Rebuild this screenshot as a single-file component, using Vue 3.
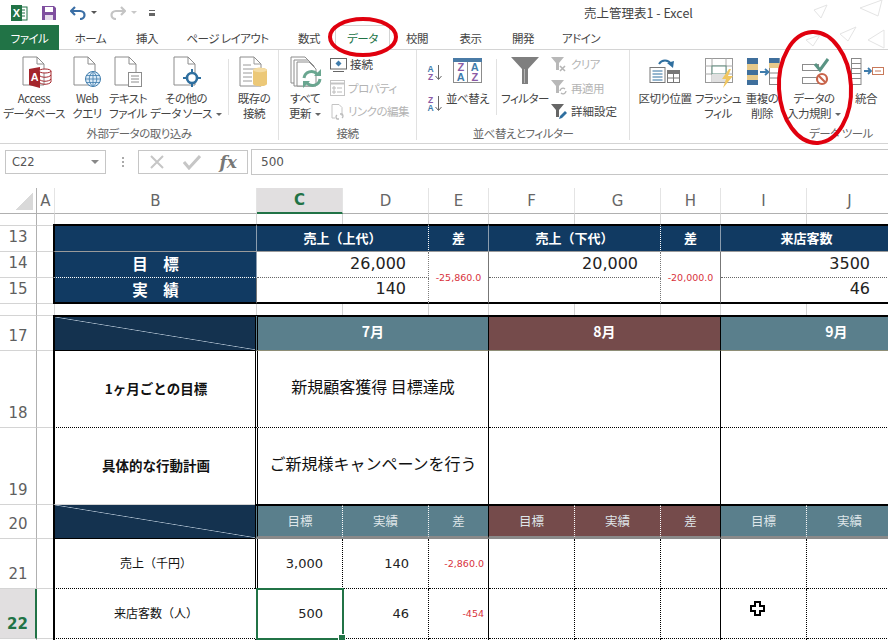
<template>
  <div class="window">
    <!-- Title bar -->
    <div class="titlebar">
      <div class="qat">
        <svg class="qi" width="18" height="18" viewBox="0 0 18 18">
          <rect x="7" y="3" width="10" height="13" fill="#fff" stroke="#217346" />
          <path d="M10 6h5M10 9h5M10 12h5" stroke="#217346" />
          <rect x="1" y="1" width="11" height="16" fill="#217346" />
          <text x="6.5" y="13" text-anchor="middle" class="xl">X</text>
        </svg>
        <svg class="qi save" width="16" height="16" viewBox="0 0 16 16">
          <path d="M1 1h12l2 2v12H1z" fill="#7f4f9f" />
          <rect x="4" y="2" width="8" height="5" fill="#fff" />
          <rect x="4" y="10" width="8" height="5" fill="#e6dcec" />
        </svg>
        <svg class="qi undo" width="16" height="14" viewBox="0 0 16 14">
          <path d="M5 1 1 5l4 4M1.500 5H10c6 0 6 8 0 8" fill="none" stroke="#3a6ea5" stroke-width="2.200" />
        </svg>
        <i class="caret dark"></i>
        <svg class="qi redo" width="16" height="14" viewBox="0 0 16 14">
          <path d="m11 1 4 4-4 4M14.500 5H6c-6 0-6 8 0 8" fill="none" stroke="#c4c4c4" stroke-width="2.200" />
        </svg>
        <i class="caret light"></i>
        <span class="qat-more"></span>
      </div>
      <span class="doc-title">売上管理表1 - Excel</span>
    </div>

    <!-- Tabs -->
    <div class="tabs">
      <span class="file-tab">ファイル</span>
      <span v-for="tab in tabs" :key="tab" class="tab" :class="{ active: tab === 'データ' }">{{ tab }}</span>
    </div>

    <!-- Ribbon -->
    <div class="ribbon">
      <section class="group g1">
        <div class="group-body">
          <div class="big">
            <svg class="ico" width="36" height="32" viewBox="0 0 36 32">
              <path d="M7 1h14l7 7v21H7z" fill="#fff" stroke="#8c8c8c" />
              <path d="M21 1v7h7" fill="none" stroke="#8c8c8c" />
              <path d="M13 13l11-2v21l-11-3z" fill="#a4262c" />
              <text x="18.500" y="25" text-anchor="middle" class="acc">A</text>
              <ellipse cx="29" cy="15" rx="6" ry="2" fill="#fff" stroke="#a4262c" />
              <path d="M23 15v11c2 3 10 3 12 0V15M23 19c2 3 10 3 12 0M23 23c2 3 10 3 12 0" fill="none" stroke="#a4262c" />
            </svg>
            <span>Access<br />データベース</span>
          </div>
          <div class="big">
            <svg class="ico" width="30" height="32" viewBox="0 0 30 32">
              <path d="M2 1h14l7 7v21H2z" fill="#fff" stroke="#8c8c8c" />
              <path d="M16 1v7h7" fill="none" stroke="#8c8c8c" />
              <circle cx="21" cy="23" r="7.500" fill="#dcebf7" stroke="#3f7cac" />
              <path d="M13.500 23h15M14.500 19.500h13M14.500 26.500h13M21 15.500v15M21 15.500c-5 4-5 11 0 15M21 15.500c5 4 5 11 0 15" fill="none" stroke="#3f7cac" stroke-width=".8" />
            </svg>
            <span>Web<br />クエリ</span>
          </div>
          <div class="big">
            <svg class="ico" width="30" height="32" viewBox="0 0 30 32">
              <path d="M2 1h14l7 7v21H2z" fill="#fff" stroke="#8c8c8c" />
              <path d="M16 1v7h7" fill="none" stroke="#8c8c8c" />
              <rect x="15.500" y="16.500" width="13" height="14" fill="#fff" stroke="#8c8c8c" />
              <path d="M18 20h8M18 23h8M18 26h8" stroke="#8c8c8c" />
            </svg>
            <span>テキスト<br />ファイル</span>
          </div>
          <div class="big">
            <svg class="ico" width="30" height="32" viewBox="0 0 30 32">
              <path d="M3 1h14l7 7v21H3z" fill="#fff" stroke="#8c8c8c" />
              <path d="M17 1v7h7" fill="none" stroke="#8c8c8c" />
              <circle cx="21" cy="22" r="5" fill="#fff" stroke="#2f6f9f" stroke-width="2.600" />
              <path d="M21 13v5M21 26v5M12 22h5M25 22h5" stroke="#2f6f9f" stroke-width="2" />
            </svg>
            <span>その他の<br />データ ソース<i class="caret"></i></span>
          </div>
          <div class="sep"></div>
          <div class="big">
            <svg class="ico" width="32" height="32" viewBox="0 0 32 32">
              <path d="M2 1h14l7 7v22H2z" fill="#fff" stroke="#8c8c8c" />
              <path d="M16 1v7h7M5 9h8M5 13h14M5 17h9M5 21h9M5 25h9" fill="none" stroke="#9a9a9a" />
              <path d="M15 14c1-3 13-3 14 0v14c-1 3-13 3-14 0z" fill="#ecc877" />
              <ellipse cx="22" cy="14" rx="7" ry="2.200" fill="#f4dca4" />
            </svg>
            <span>既存の<br />接続</span>
          </div>
        </div>
        <div class="group-label">外部データの取り込み</div>
      </section>

      <section class="group g2">
        <div class="group-body">
          <div class="big">
            <svg class="ico" width="36" height="32" viewBox="0 0 36 32">
              <path d="M4 1h14l6 6v20H4z" fill="#fff" stroke="#8c8c8c" />
              <path d="M7 4h14l6 6v20H7z" fill="#fff" stroke="#8c8c8c" />
              <path d="M10 6h12l7 7v17H10z" fill="#fff" stroke="#8c8c8c" />
              <path d="M17 22a7.500 7.500 0 0 1 13-4" fill="none" stroke="#6aa690" stroke-width="3" />
              <path d="M33 23a7.500 7.500 0 0 1-13 4" fill="none" stroke="#6aa690" stroke-width="3" />
              <path d="M27 20h7v-7zM23 25h-7v7z" fill="#6aa690" />
            </svg>
            <span>すべて<br />更新<i class="caret"></i></span>
          </div>
          <div class="smalls">
            <div class="small">
              <svg width="17" height="14" viewBox="0 0 17 14">
                <rect x=".5" y=".5" width="16" height="10.500" fill="#fff" stroke="#666" />
                <path d="M3 13.500h11" stroke="#666" />
                <path d="m8.500 2.500 3 3-3 3-3-3z" fill="#3f7cac" />
              </svg>
              <span>接続</span>
            </div>
            <div class="small off">
              <svg width="15" height="16" viewBox="0 0 15 16">
                <rect x=".5" y=".5" width="14" height="15" fill="#fff" stroke="#c4c4c4" />
                <path d="M1 3.500h13" stroke="#c4c4c4" stroke-width="2" />
                <path d="M3 7h2v2H3zM3 11h2v2H3zM7 8h5M7 12h5" fill="none" stroke="#bbb" />
              </svg>
              <span>プロパティ</span>
            </div>
            <div class="small off">
              <svg width="15" height="16" viewBox="0 0 15 16">
                <path d="M2 .5h7l3 3V12M2 .5V14h3" fill="none" stroke="#c4c4c4" />
                <path d="M7 11a2.500 2.500 0 0 0 0 4h2M10 10h2a2.500 2.500 0 0 1 0 4" fill="none" stroke="#bbb" stroke-width="1.300" />
              </svg>
              <span>リンクの編集</span>
            </div>
          </div>
        </div>
        <div class="group-label">接続</div>
      </section>

      <section class="group g3">
        <div class="group-body">
          <div class="sort-col">
            <svg width="16" height="17" viewBox="0 0 16 17">
              <text x="4.500" y="8" text-anchor="middle" class="az blue">A</text>
              <text x="4.500" y="16" text-anchor="middle" class="az purple">Z</text>
              <path d="M12.500 1v14M9.500 12l3 3.500 3-3.500" fill="none" stroke="#666" />
            </svg>
            <svg width="16" height="17" viewBox="0 0 16 17">
              <text x="4.500" y="8" text-anchor="middle" class="az purple">Z</text>
              <text x="4.500" y="16" text-anchor="middle" class="az blue">A</text>
              <path d="M12.500 1v14M9.500 12l3 3.500 3-3.500" fill="none" stroke="#666" />
            </svg>
          </div>
          <div class="big">
            <svg class="ico" width="30" height="32" viewBox="0 0 30 32">
              <rect x=".5" y="2.500" width="28" height="24" fill="#fff" stroke="#8c8c8c" />
              <rect y="2" width="29" height="4" fill="#4a7ba6" />
              <path d="M14.500 6v20" stroke="#8c8c8c" />
              <text x="7.500" y="15" text-anchor="middle" class="za purple">Z</text>
              <text x="7.500" y="25" text-anchor="middle" class="za blue">A</text>
              <text x="21.500" y="15" text-anchor="middle" class="za blue">A</text>
              <text x="21.500" y="25" text-anchor="middle" class="za purple">Z</text>
            </svg>
            <span>並べ替え</span>
          </div>
          <div class="sep"></div>
          <div class="big">
            <svg class="ico" width="30" height="32" viewBox="0 0 30 32">
              <path d="M1 1h28L18 13v15h-6V13z" fill="#7f7f7f" />
              <path d="M14.500 13v14" stroke="#b5b5b5" />
            </svg>
            <span>フィルター</span>
          </div>
          <div class="smalls">
            <div class="small off">
              <svg width="17" height="16" viewBox="0 0 17 16">
                <path d="M0 0h13L8 6v7H5V6z" fill="#b8b8b8" />
                <path d="m9 9 5 5M14 9l-5 5" stroke="#b5b5b5" stroke-width="1.600" />
              </svg>
              <span>クリア</span>
            </div>
            <div class="small off">
              <svg width="17" height="16" viewBox="0 0 17 16">
                <path d="M0 0h13L8 6v7H5V6z" fill="#b8b8b8" />
                <path d="M9 11a3 3 0 0 1 5-2M15 11a3 3 0 0 1-5 2" fill="none" stroke="#b5b5b5" stroke-width="1.300" />
              </svg>
              <span>再適用</span>
            </div>
            <div class="small">
              <svg width="17" height="16" viewBox="0 0 17 16">
                <path d="M0 0h13L8 6v7H5V6z" fill="#666" />
                <path d="m8 15 1-3 5-5 2 2-5 5z" fill="#2f6f9f" />
              </svg>
              <span>詳細設定</span>
            </div>
          </div>
        </div>
        <div class="group-label">並べ替えとフィルター</div>
      </section>

      <section class="group g4">
        <div class="group-body">
          <div class="big">
            <svg class="ico" width="32" height="32" viewBox="0 0 32 32">
              <path d="M10 8a7 7 0 0 1 12 0" fill="none" stroke="#2f6f9f" stroke-width="2" />
              <path d="m18 7 6 5 1-7z" fill="#2f6f9f" />
              <rect x="1" y="11.500" width="15" height="15" fill="#fff" stroke="#777" />
              <path d="M3.500 15h10M3.500 18h10M3.500 21h10M3.500 24h10" stroke="#2f6f9f" />
              <rect x="18.500" y="14.500" width="12" height="12" fill="#fff" stroke="#777" />
              <path d="M19 15h11v3H19z" fill="#777" />
              <path d="M24.500 18v8M19 22h11" stroke="#777" />
            </svg>
            <span>区切り位置</span>
          </div>
          <div class="big">
            <svg class="ico" width="32" height="32" viewBox="0 0 32 32">
              <g transform="translate(2 1)">
                <rect x="1.500" y="1.500" width="27" height="24" fill="#fff" stroke="#999" />
                <path d="M1 9h28M1 17h28M8 1v25M22 1v25" stroke="#aaa" />
                <rect x="8" y="9" width="14" height="8" fill="#fff" stroke="#5d8a7d" />
                <rect x="8" y="17" width="14" height="8" fill="#e0e0e0" />
                <path d="m25 12-7 10h4l-3 9 10-12h-5l3-7z" fill="#f0c660" />
              </g>
            </svg>
            <span>フラッシュ<br />フィル</span>
          </div>
          <div class="big">
            <svg class="ico" width="36" height="32" viewBox="0 0 36 32">
              <g transform="translate(2 2)">
                <rect x="1" y="0" width="11" height="27" fill="#3f6f9c" />
                <rect x="1" y="6" width="11" height="6" fill="#e6c98a" />
                <rect x="1" y="17" width="11" height="5" fill="#e6c98a" />
                <path d="M14 14h7M19 11l3.500 3-3.500 3" fill="none" stroke="#3f7cac" stroke-width="1.800" />
                <rect x="23.500" y=".5" width="9.500" height="26" fill="#fff" stroke="#888" />
                <rect x="23" y="0" width="10.500" height="5" fill="#3f6f9c" />
                <rect x="23" y="5" width="10.500" height="5" fill="#e6c98a" />
                <path d="M23 15h10M23 20h10" stroke="#888" />
              </g>
            </svg>
            <span>重複の<br />削除</span>
          </div>
          <div class="big">
            <svg class="ico" width="40" height="32" viewBox="0 0 40 32">
              <rect x="8.500" y="8.500" width="16" height="6" fill="#fff" stroke="#8c8c8c" />
              <rect x="8.500" y="21.500" width="16" height="6" fill="#fff" stroke="#8c8c8c" />
              <path d="m21 8 5 6 8-11" fill="none" stroke="#5a9484" stroke-width="3" />
              <circle cx="28" cy="23" r="5" fill="#fff" stroke="#c8644a" stroke-width="2.200" />
              <path d="m24.500 19.500 7 7" stroke="#c8644a" stroke-width="2.200" />
            </svg>
            <span>データの<br />入力規則<i class="caret"></i></span>
          </div>
          <div class="big">
            <svg class="ico" width="36" height="32" viewBox="0 0 36 32">
              <rect x="3.500" y="2.500" width="9.500" height="26" fill="#fff" stroke="#888" />
              <path d="M4 7.500h9M4 12.500h9M4 17.500h9M4 22.500h9" stroke="#888" />
              <path d="M16 15h6M20 12l3 3-3 3" fill="none" stroke="#3f7cac" stroke-width="1.800" />
              <rect x="24.500" y="11.500" width="11" height="7" fill="#fff" stroke="#c8795a" />
              <path d="M27 15h6" stroke="#c8795a" />
            </svg>
            <span>統合</span>
          </div>
        </div>
        <div class="group-label">データ ツール</div>
      </section>
    </div>

    <!-- Formula bar -->
    <div class="formula">
      <div class="namebox">C22<i class="caret big-caret"></i></div>
      <span class="grip"></span>
      <div class="fx-btns">
        <svg width="16" height="16" viewBox="0 0 16 16">
          <path d="m2 2 12 12M14 2 2 14" stroke="#c6c6c6" stroke-width="2" />
        </svg>
        <svg width="18" height="16" viewBox="0 0 18 16">
          <path d="m1 8 5 6L17 2" fill="none" stroke="#c6c6c6" stroke-width="3" />
        </svg>
        <em>fx</em>
      </div>
      <div class="input">500</div>
    </div>

    <!-- Sheet -->
    <div class="sheet">
      <template v-for="(row, r) in rows" :key="r">
        <div class="rh" :class="row.rh"><span>{{ row.n }}</span></div>
        <div v-for="(cell, i) in row.cells" :key="i" class="cell" :class="cell.cls">{{ cell.t }}</div>
      </template>
      <div class="cursor">
        <svg width="15" height="15" viewBox="0 0 15 15">
          <path d="M5 1h5v4h4v5h-4v4H5v-4H1V5h4z" fill="#fff" stroke="#000" stroke-width="2" />
        </svg>
      </div>
    </div>

    <!-- Faint paper planes of the title bar -->
    <svg class="planes" width="90" height="50" viewBox="0 0 90 50">
      <path d="m16 10 13-5-6 13zM42 34l16-7-8 14zM62 8l22-8-4 16zM8 40l14-5-7 11zM70 40l16-10v18z" fill="none" stroke="#e4e4e4" />
    </svg>

    <!-- Red hand-drawn marks -->
    <svg class="marks" width="888" height="640" viewBox="0 0 888 640">
      <ellipse cx="363" cy="37" rx="33" ry="18" />
      <ellipse cx="815" cy="87.500" rx="36" ry="55.500" transform="rotate(-3 815 87.500)" />
    </svg>
  </div>
</template>

<script setup>
const tabs = ['ホーム', '挿入', 'ページ レイアウト', '数式', 'データ', '校閲', '表示', '開発', 'アドイン']

const c = (cls = '', t = '') => ({ cls, t })
const blank = (n, cls = '') => Array.from({ length: n }, () => c(cls))

// 縦罫線つきの空行（C〜K）
const plainCells = (cls) => [
  c(`dbl ${cls} dot-r`), c(`${cls} dot-r`), c(`${cls} blk-r`),
  c(`${cls} dot-r`), c(`${cls} dot-r`), c(`${cls} blk-r`),
  c(`${cls} dot-r`), c(`${cls} dot-r`), c(cls)
]

const rows = [
  {
    n: '',
    rh: 'corner',
    cells: ['A', 'B', 'C', 'D', 'E', 'F', 'G', 'H', 'I', 'J', 'K'].map((l) => c(l === 'C' ? 'hd on' : 'hd', l))
  },
  { n: '12', rh: 'clip', cells: blank(11) },
  {
    n: '13',
    cells: [
      c('a-edge'), c('left navy top'),
      c('navy top dotw s2', '売上（上代）'), c('navy top', '差'),
      c('navy top dotw s2', '売上（下代）'), c('navy top', '差'),
      c('navy top s2', '来店客数'), c('navy top')
    ]
  },
  {
    n: '14',
    cells: [
      c('a-edge'), c('left navy label dotb', '目　標'),
      c('val s2 dotg', '26,000'), c('minus r2', '-25,860.0'),
      c('val s2 dotg', '20,000'), c('minus r2', '-20,000.0'),
      c('val s2 dotb-g', '3500'), c('')
    ]
  },
  {
    n: '15',
    cells: [
      c('a-edge'), c('left navy label end', '実　績'),
      c('val s2 end dotg-r', '140'),
      c('val s2 end dotg-r'),
      c('val s2 end', '46'), c('end')
    ]
  },
  { n: '16', rh: 'clip', cells: blank(11) },
  {
    n: '17',
    cells: [
      c('a-edge'), c('left diag head'),
      c('dbl teal month s3 head', '7月'), c('maroon month s3 head', '8月'), c('teal month s3 head', '9月')
    ]
  },
  {
    n: '18',
    cells: [
      c('a-edge'), c('left plain strong dotb-k', '1ヶ月ごとの目標'),
      c('dbl plan s3 dotb-k blk-r', '新規顧客獲得 目標達成'), c('plan s3 dotb-k blk-r'), c('plan s3 dotb-k')
    ]
  },
  {
    n: '19',
    cells: [
      c('a-edge'), c('left plain strong', '具体的な行動計画'),
      c('dbl plan s3 blk-r blk-b', 'ご新規様キャンペーンを行う'), c('plan s3 blk-r blk-b'), c('plan s3 blk-b')
    ]
  },
  {
    n: '20',
    cells: [
      c('a-edge'), c('left diag blk-b'),
      c('dbl teal sub dotw-r', '目標'), c('teal sub dotw-r', '実績'), c('teal sub blk-r', '差'),
      c('maroon sub dotw-r', '目標'), c('maroon sub dotw-r', '実績'), c('maroon sub blk-r', '差'),
      c('teal sub dotw-r', '目標'), c('teal sub dotw-r', '実績'), c('teal sub')
    ]
  },
  {
    n: '21',
    cells: [
      c('a-edge'), c('left plain item dotb-k', '売上（千円）'),
      c('dbl num dotb-k dot-r', '3,000'), c('num dotb-k dot-r', '140'), c('red dotb-k blk-r', '-2,860.0'),
      ...plainCells('dotb-k').slice(3)
    ]
  },
  {
    n: '22',
    rh: 'on',
    cells: [
      c('a-edge'), c('left plain item dotb-k', '来店客数（人）'),
      c('sel num dotb-k dot-r', '500'), c('num dotb-k dot-r', '46'), c('red dotb-k blk-r', '-454'),
      ...plainCells('dotb-k').slice(3)
    ]
  },
  {
    n: '',
    cells: [c('a-edge'), c('left plain'), ...plainCells('')]
  }
]
</script>

<style scoped>
.window {
  position: relative;
  width: 888px;
  height: 640px;
  overflow: hidden;
  background: #fff;
  color: #444;
  font-family: "Noto Sans CJK JP", "Noto Sans", sans-serif;
}

/* Title bar */
.titlebar {
  position: relative;
  display: flex;
  align-items: center;
  height: 25px;
}

.qat {
  display: flex;
  align-items: center;
  padding-left: 10px;
}

.qi.save {
  margin-left: 13px;
}

.qi.undo {
  margin-left: 13px;
}

.qi.redo {
  margin-left: 13px;
}

.qat .caret {
  margin: 0 0 0 5px;
}

.caret {
  display: inline-block;
  width: 0;
  height: 0;
  margin-left: 4px;
  vertical-align: 2px;
  border-left: 3px solid transparent;
  border-right: 3px solid transparent;
  border-top: 3px solid #666;
}

.caret.light {
  border-top-color: #c8c8c8;
}

.caret.dark {
  border-top-color: #555;
}

.qat-more {
  width: 6px;
  height: 6px;
  margin-left: 12px;
  border-top: 1px solid #666;
  border-bottom: 3px solid #666;
  box-sizing: border-box;
}

.xl {
  font: 700 11px "Liberation Sans", sans-serif;
  fill: #fff;
}

.doc-title {
  position: absolute;
  left: 584px;
  top: 4px;
  font-size: 12.500px;
  line-height: 18px;
  color: #444;
}

/* Tabs */
.tabs {
  display: grid;
  grid-template-columns: 59px 63px 50px 111px 52px 55px 54px 53px 52px 64px;
  height: 25px;
  box-sizing: border-box;
  border-bottom: 1px solid #d4d4d4;
  font-size: 11.500px;
  font-feature-settings: "palt";
  letter-spacing: -0.5px;
}

.file-tab {
  display: flex;
  align-items: center;
  justify-content: center;
  height: 25px;
  background: #217346;
  color: #fff;
}

.tab {
  display: flex;
  align-items: center;
  justify-content: center;
  height: 25px;
  box-sizing: border-box;
  white-space: nowrap;
  color: #444;
}

.tab.active {
  border: 1px solid #d4d4d4;
  border-bottom-color: #fff;
  color: #217346;
}

/* Ribbon */
.ribbon {
  display: flex;
  height: 94px;
  overflow: hidden;
  box-sizing: border-box;
  border-bottom: 1px solid #d4d4d4;
  font-size: 11.500px;
  line-height: 15px;
  font-feature-settings: "palt";
}

.group {
  position: relative;
  flex: none;
  box-sizing: border-box;
  border-right: 1px solid #e1e1e1;
  margin-bottom: 3px;
}

.g1 { width: 279px; }
.g2 { width: 138px; }
.g3 { width: 213px; }
.g4 { width: 422px; border-right: 0; }

.group-body {
  display: grid;
  height: 76px;
  align-items: start;
}

.g1 .group-body { grid-template-columns: 68px 38px 44px 72px 12px 40px; }
.g2 .group-body { grid-template-columns: 5px 42px 1fr; }
.g2 .big { grid-column: 2; }
.g3 .group-body { grid-template-columns: 29px 43px 14px 44px 1fr; }
.g4 .group-body {
  grid-template-columns: 66px 40px 48px 56px 48px;
  padding-left: 2px;
}

.group-label {
  height: 15px;
  text-align: center;
  color: #666;
  white-space: nowrap;
  letter-spacing: -0.5px;
}

.big {
  display: flex;
  flex-direction: column;
  align-items: center;
  padding-top: 6px;
  text-align: center;
  white-space: nowrap;
  letter-spacing: -0.5px;
}

.ico {
  flex: none;
  height: 32px;
  margin-bottom: 3px;
}

.sep {
  justify-self: center;
  width: 1px;
  height: 56px;
  margin-top: 9px;
  background: #e1e1e1;
}

.smalls {
  display: flex;
  flex-direction: column;
  padding: 3px 0 0 4px;
}

.small {
  display: flex;
  align-items: center;
  gap: 3px;
  height: 23.500px;
  white-space: nowrap;
}

.small.off {
  color: #b4b4b4;
  letter-spacing: -0.5px;
}

.sort-col {
  display: flex;
  flex-direction: column;
  gap: 14px;
  padding: 14px 0 0 9px;
}

.az {
  font: 700 8.500px "Liberation Sans", sans-serif;
}

.za {
  font: 700 11px "Liberation Sans", sans-serif;
}

.blue { fill: #3f7cac; }
.purple { fill: #8a5aa5; }

.acc {
  font: 700 11px "Liberation Sans", sans-serif;
  fill: #fff;
}

/* Formula bar */
.formula {
  display: flex;
  align-items: center;
  height: 44px;
  padding: 0 0 9px 5px;
  box-sizing: border-box;
  font-size: 12.500px;
  color: #555;
}

.namebox {
  display: flex;
  align-items: center;
  justify-content: space-between;
  width: 101px;
  height: 24px;
  padding: 0 6px;
  box-sizing: border-box;
  border: 1px solid #c6c6c6;
  font-family: "DejaVu Sans", sans-serif;
  font-size: 11.500px;
}

.big-caret {
  border-left-width: 4px;
  border-right-width: 4px;
  border-top-width: 4px;
  border-top-color: #888;
  vertical-align: 0;
}

.grip {
  width: 2px;
  height: 10px;
  margin: 0 14px 0 16px;
  background-image: linear-gradient(#aaa 50%, transparent 50%);
  background-size: 2px 4px;
}

.fx-btns {
  display: flex;
  align-items: center;
  justify-content: space-between;
  width: 110px;
  height: 24px;
  padding: 0 10px;
  box-sizing: border-box;
  border: 1px solid #c6c6c6;
}

.fx-btns em {
  font: italic 700 17px "DejaVu Serif", serif;
  color: #777;
}

.input {
  display: flex;
  align-items: center;
  flex: 1;
  height: 24px;
  margin-left: 3px;
  padding-left: 9px;
  border: 1px solid #c6c6c6;
  border-right: 0;
  font-family: "DejaVu Sans", sans-serif;
  font-size: 12px;
}

/* Sheet */
.sheet {
  position: relative;
  display: grid;
  grid-template-columns: 37px 18px 202px 86px 86px 60px 86px 86px 60px 86px 86px 60px;
  grid-template-rows: 26px 12px 26px 26px 26px 12px 35px 77px 77px 34px 50px 50px 10px;
  width: 953px;
  height: 453px;
  font-family: "Noto Sans CJK JP", sans-serif;
}

.rh {
  display: flex;
  align-items: flex-end;
  justify-content: center;
  overflow: hidden;
  box-sizing: border-box;
  padding-bottom: 6px;
  border-right: 1px solid #b0b0b0;
  border-bottom: 1px solid #d4d4d4;
  font-family: "DejaVu Sans", sans-serif;
  font-size: 15px;
  line-height: 16px;
  color: #5f5f5f;
}

.rh.clip {
  padding-bottom: 0;
}

.rh.clip span {
  transform: translateY(-8px);
}

.rh.corner {
  border-bottom: 1px solid #b0b0b0;
  background: linear-gradient(135deg, transparent 50%, #d9d9d9 50%) 15px 4px / 18px 18px no-repeat;
}

.rh.on {
  background: #e1dfe0;
  border-right: 2px solid #217346;
  font-weight: 700;
  color: #217346;
}

.cell {
  display: flex;
  align-items: center;
  justify-content: center;
  min-width: 0;
  overflow: hidden;
  box-sizing: border-box;
  border-right: 1px solid #d4d4d4;
  border-bottom: 1px solid #d4d4d4;
  white-space: nowrap;
  color: #111;
  font-size: 12px;
}

.s2 { grid-column: span 2; }
.s3 { grid-column: span 3; }
.r2 { grid-row: span 2; }

.hd {
  border-right-color: #e4e4e4;
  border-bottom: 1px solid #b0b0b0;
  font-family: "DejaVu Sans", sans-serif;
  font-size: 15px;
  color: #666;
}

.hd.on {
  background: #e1dfe0;
  border-bottom: 2px solid #217346;
  font-weight: 700;
  color: #217346;
}

.a-edge {
  border-right: 0;
}

.left {
  margin-left: -2px;
  border-left: 2px solid #000;
}

.navy {
  padding-bottom: 3px;
  background: #113a62;
  color: #fff;
  font-weight: 700;
  font-size: 13px;
  border-right: 1px solid #8b9cae;
  border-bottom: 1px solid #9a9a9a;
}

.navy.top {
  margin-top: -2px;
  border-top: 2px solid #000;
}

.navy.dotw {
  border-right: 1px dotted #fff;
}

.label {
  font-size: 15.500px;
  border-right: 1px solid #8b9cae;
}

.label.dotb {
  border-bottom: 1px dotted #fff;
}

.label.end {
  border-bottom: 2px solid #000;
}

.val {
  justify-content: flex-end;
  padding-right: 22px;
  padding-bottom: 3px;
  font-family: "DejaVu Sans", sans-serif;
  font-size: 16px;
  color: #222;
  border-right: 1px dotted #777;
  border-bottom: 1px dotted #666;
}

.val.end,
.cell.end {
  border-bottom: 2px solid #000;
  border-right-color: #777;
}

.minus {
  font-family: "DejaVu Sans", sans-serif;
  font-size: 9.500px;
  color: #d8323c;
  border-right: 1px solid #777;
  border-bottom: 2px solid #000;
}

.diag {
  background:
    linear-gradient(to top right, transparent calc(50% - 0.7px), #a3b5c6 50%, transparent calc(50% + 0.7px)),
    #14324f;
  border-right: 0;
}

.dbl {
  margin-left: -2px;
  border-left: 3px double #000;
}

.teal {
  background: #5a7f8c;
  color: #fff;
}

.maroon {
  background: #754b4b;
  color: #fff;
}

.month {
  padding-bottom: 5px;
  border-right: 1px solid #000;
  border-bottom: 1px solid #8e8e76;
  font-size: 14px;
  font-weight: 700;
}

.head {
  margin-top: -1px;
  border-top: 2px solid #000;
}

.diag.head {
  border-bottom: 1px solid #000;
}

.sub {
  padding-bottom: 2px;
  border-bottom: 3px solid #8a8a8a;
  border-top: 1px solid #000;
  font-size: 12.500px;
  color: #dfe6e9;
}

.plain {
  border-right: 0;
}

.strong {
  padding-bottom: 3px;
  font-size: 13.500px;
  font-weight: 700;
}

.item {
  padding-bottom: 2px;
  font-size: 12px;
}

.plan {
  padding-bottom: 6px;
  font-size: 16px;
  color: #111;
}

.num {
  justify-content: flex-end;
  padding-right: 19px;
  font-family: "DejaVu Sans", sans-serif;
  font-size: 13px;
  color: #222;
}

.red {
  justify-content: flex-end;
  padding-right: 4px;
  font-family: "DejaVu Sans", sans-serif;
  font-size: 9.500px;
  color: #d8323c;
}

.dot-r { border-right: 1px dotted #000; }
.dotw-r { border-right: 1px dotted #fff; }
.blk-r { border-right: 1px solid #000; }
.blk-b { border-bottom: 1px solid #000; }
.dotb-k { border-bottom: 1px dotted #000; }

/* Selected cell */
.sel {
  position: relative;
  z-index: 2;
  overflow: visible;
  outline: 2px solid #217346;
  outline-offset: -1px;
}

.sel::after {
  content: "";
  position: absolute;
  right: -4px;
  bottom: -4px;
  width: 6px;
  height: 6px;
  background: #217346;
  border: 1px solid #fff;
}

.cursor {
  position: absolute;
  left: 750px;
  top: 413px;
  z-index: 3;
  line-height: 0;
}

.planes {
  position: absolute;
  right: 0;
  top: 0;
  pointer-events: none;
}

.marks {
  position: absolute;
  left: 0;
  top: 0;
  z-index: 5;
  pointer-events: none;
}

.marks ellipse {
  fill: none;
  stroke: #e0000e;
  stroke-width: 4;
}
</style>
